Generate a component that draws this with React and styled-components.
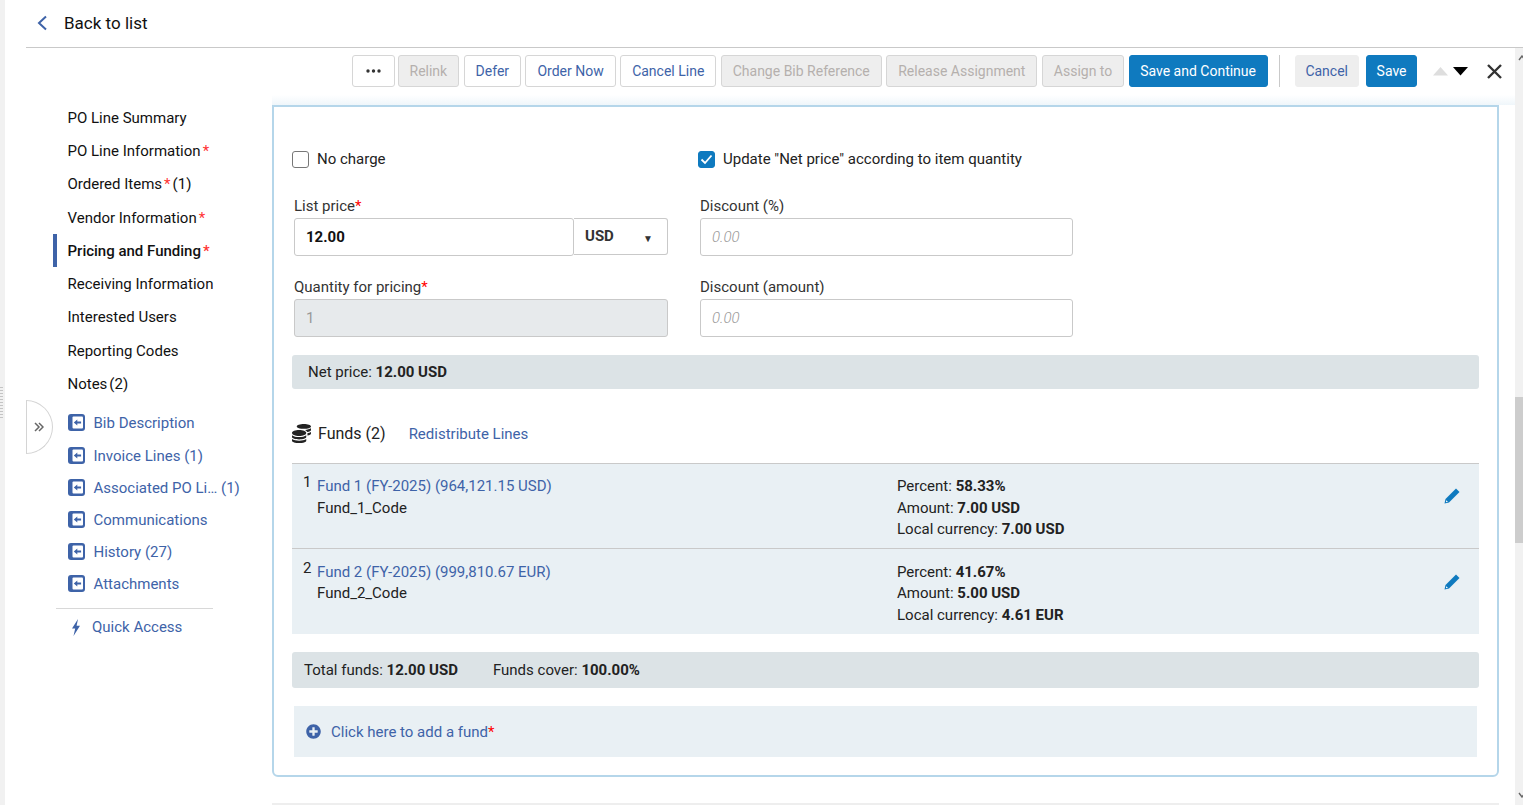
import React from "react";
import styled, { createGlobalStyle } from "styled-components";
import { FaCoins, FaPlusCircle } from "react-icons/fa";

const LINK = "#3e63a8";
const ITEM_BG = "#e9f0f4";
const BAR_BG = "#dce3e6";
const LINE = "#c9c9c9";

const GlobalStyle = createGlobalStyle`
  html, body {
    margin: 0;
    height: 100%;
    overflow: hidden;
    background: #fff;
  }
  body {
    font-family: Roboto, "Liberation Sans", sans-serif;
    font-size: 15px;
    color: #222;
  }
  * { box-sizing: border-box; }
`;

const sections = [
  { name: "PO Line Summary" },
  { name: "PO Line Information", required: true },
  { name: "Ordered Items", required: true, count: "(1)" },
  { name: "Vendor Information", required: true },
  { name: "Pricing and Funding", required: true, active: true },
  { name: "Receiving Information" },
  { name: "Interested Users" },
  { name: "Reporting Codes" },
  { name: "Notes", count: "(2)" },
];

const links = [
  "Bib Description",
  "Invoice Lines (1)",
  "Associated PO Li… (1)",
  "Communications",
  "History (27)",
  "Attachments",
];

const funds = [
  {
    id: 1,
    name: "Fund 1 (FY-2025) (964,121.15 USD)",
    code: "Fund_1_Code",
    percent: "58.33%",
    amount: "7.00 USD",
    local: "7.00 USD",
  },
  {
    id: 2,
    name: "Fund 2 (FY-2025) (999,810.67 EUR)",
    code: "Fund_2_Code",
    percent: "41.67%",
    amount: "5.00 USD",
    local: "4.61 EUR",
  },
];

const LinkIcon = () => (
  <svg width="17" height="17" viewBox="0 0 17 17">
    <rect width="17" height="17" rx="3" fill={LINK} />
    <rect x="4.5" y="2.5" width="10.5" height="12" rx="1" fill="#fff" />
    <path d="M5.8 8.5 9.3 5.5v2h3.8v2H9.3v2z" fill={LINK} />
  </svg>
);

const PencilIcon = () => (
  <svg width="16" height="16" viewBox="0 0 16 16">
    <path d="M12 .5 15.5 4 5 14.5.5 15.5 1.5 11z" fill="#0f7abf" />
    <path d="M2.4 12.2 3.9 13.7 1.9 14.2z" fill="#fff" />
  </svg>
);

const App = () => {
  return (
    <>
      <GlobalStyle />
      <Page>
        <LeftStrip>
          <Grip />
        </LeftStrip>
        <Main>
          <Header>
            <svg width="12" height="16" viewBox="0 0 12 16">
              <path d="M10 1.5 3 8l7 6.5" fill="none" stroke={LINK} strokeWidth="2" />
            </svg>
            <BackText>Back to list</BackText>
          </Header>

          <Workspace>
            <Content>
              <Toolbar>
                <DotsButton>
                  <svg width="15" height="4" viewBox="0 0 15 4">
                    <circle cx="2" cy="2" r="1.7" fill="#333" />
                    <circle cx="7.5" cy="2" r="1.7" fill="#333" />
                    <circle cx="13" cy="2" r="1.7" fill="#333" />
                  </svg>
                </DotsButton>
                <Button disabled>Relink</Button>
                <Button>Defer</Button>
                <Button>Order Now</Button>
                <Button>Cancel Line</Button>
                <Button disabled>Change Bib Reference</Button>
                <Button disabled>Release Assignment</Button>
                <Button disabled>Assign to</Button>
                <PrimaryButton>Save and Continue</PrimaryButton>
                <Separator />
                <GhostButton>Cancel</GhostButton>
                <SaveButton>Save</SaveButton>
                <Arrows>
                  <svg width="15" height="9" viewBox="0 0 15 9">
                    <path d="M0 8.5 7.5 0 15 8.5z" fill="#dedede" />
                  </svg>
                  <svg width="15" height="9" viewBox="0 0 15 9">
                    <path d="M0 0h15L7.5 8.5z" fill="#000" />
                  </svg>
                </Arrows>
                <svg width="17" height="17" viewBox="0 0 17 17">
                  <path d="M2 2l13 13M15 2 2 15" stroke="#333" strokeWidth="2.4" />
                </svg>
              </Toolbar>

              <Body>
                <Sidebar>
                  <CollapseTab>
                    <svg width="10" height="10" viewBox="0 0 10 10">
                      <path d="M1 1l4 4-4 4M5 1l4 4-4 4" fill="none" stroke="#666" strokeWidth="1.5" />
                    </svg>
                  </CollapseTab>
                  <SectionList>
                    {sections.map((s) => (
                      <SectionItem key={s.name} $active={s.active}>
                        {s.name}
                        {s.required && <SideStar>*</SideStar>}
                        {s.count && <Count>{s.count}</Count>}
                      </SectionItem>
                    ))}
                  </SectionList>
                  <LinkList>
                    {links.map((l) => (
                      <LinkItem key={l}>
                        <LinkIcon />
                        {l}
                      </LinkItem>
                    ))}
                  </LinkList>
                  <SideDivider />
                  <QuickAccess>
                    <svg width="10" height="17" viewBox="0 0 10 17">
                      <path d="M7 0 1 9.5h3.2L2.5 17 9 6.8H5.6z" fill={LINK} />
                    </svg>
                    Quick Access
                  </QuickAccess>
                </Sidebar>

                <PanelColumn>
                  <Panel>
                    <ChecksRow>
                      <CheckLabel>
                        <Checkbox />
                        No charge
                      </CheckLabel>
                      <CheckLabel>
                        <Checkbox $checked>
                          <svg width="13" height="11" viewBox="0 0 13 11">
                            <path d="M1.5 5.5 5 9l6.5-7.5" fill="none" stroke="#fff" strokeWidth="1.8" />
                          </svg>
                        </Checkbox>
                        Update "Net price" according to item quantity
                      </CheckLabel>
                    </ChecksRow>

                    <FieldGrid>
                      <Field>
                        <FieldLabel>
                          List price<Star>*</Star>
                        </FieldLabel>
                        <PriceRow>
                          <PriceInput>12.00</PriceInput>
                          <CurrencySelect>
                            USD
                            <Caret>▼</Caret>
                          </CurrencySelect>
                        </PriceRow>
                      </Field>
                      <Field>
                        <FieldLabel>Discount (%)</FieldLabel>
                        <Input>
                          <Placeholder>0.00</Placeholder>
                        </Input>
                      </Field>
                      <Field>
                        <FieldLabel>
                          Quantity for pricing<Star>*</Star>
                        </FieldLabel>
                        <Input $disabled>1</Input>
                      </Field>
                      <Field>
                        <FieldLabel>Discount (amount)</FieldLabel>
                        <Input>
                          <Placeholder>0.00</Placeholder>
                        </Input>
                      </Field>
                    </FieldGrid>

                    <NetBar>
                      Net price: <b>12.00 USD</b>
                    </NetBar>

                    <FundsHead>
                      <FaCoins size={19} color="#222" />
                      <FundsTitle>Funds (2)</FundsTitle>
                      <Redistribute>Redistribute Lines</Redistribute>
                    </FundsHead>

                    <div>
                      {funds.map((f) => (
                        <FundRow key={f.id}>
                          <FundIndex>{f.id}</FundIndex>
                          <FundInfo>
                            <FundName>{f.name}</FundName>
                            <div>{f.code}</div>
                          </FundInfo>
                          <FundAmounts>
                            <div>
                              Percent: <b>{f.percent}</b>
                            </div>
                            <div>
                              Amount: <b>{f.amount}</b>
                            </div>
                            <div>
                              Local currency: <b>{f.local}</b>
                            </div>
                          </FundAmounts>
                          <EditButton>
                            <PencilIcon />
                          </EditButton>
                        </FundRow>
                      ))}
                    </div>

                    <TotalBar>
                      <span>
                        Total funds: <b>12.00 USD</b>
                      </span>
                      <span>
                        Funds cover: <b>100.00%</b>
                      </span>
                    </TotalBar>

                    <AddFund>
                      <FaPlusCircle size={15} color={LINK} />
                      <span>
                        Click here to add a fund<Star>*</Star>
                      </span>
                    </AddFund>
                  </Panel>
                  <BottomRule />
                </PanelColumn>
              </Body>
            </Content>

            <ScrollTrack>
              <ScrollArrow viewBox="0 0 8 6">
                <path d="M1 5 4 1l3 4" fill="none" stroke="#666" strokeWidth="1.4" />
              </ScrollArrow>
              <ScrollThumb />
              <ScrollArrow $bottom viewBox="0 0 8 6">
                <path d="M1 1l3 4 3-4" fill="none" stroke="#666" strokeWidth="1.4" />
              </ScrollArrow>
            </ScrollTrack>
          </Workspace>
        </Main>
      </Page>
    </>
  );
};

export default App;

const Page = styled.div`
  display: flex;
  height: 805px;
  overflow: hidden;
`;

const LeftStrip = styled.div`
  width: 5px;
  flex-shrink: 0;
  padding-top: 387px;
  background: #f1f1f1;
`;

const Grip = styled.div`
  width: 3px;
  height: 31px;
  background: repeating-linear-gradient(to bottom, #c4c4c4 0 1px, transparent 1px 3px);
`;

const Main = styled.div`
  flex: 1;
  min-width: 0;
  display: flex;
  flex-direction: column;
`;

const Header = styled.div`
  height: 48px;
  flex-shrink: 0;
  margin-left: 21px;
  display: flex;
  align-items: center;
  gap: 16px;
  padding: 0 0 2px 10px;
  border-bottom: 1px solid ${LINE};
`;

const BackText = styled.span`
  font-size: 17px;
  color: #111;
`;

const Workspace = styled.div`
  flex: 1;
  min-height: 0;
  display: flex;
`;

const Content = styled.div`
  flex: 1;
  min-width: 0;
  padding-left: 21px;
  display: flex;
  flex-direction: column;
`;

const Toolbar = styled.div`
  display: flex;
  align-items: center;
  justify-content: flex-end;
  gap: 4.4px;
  margin-top: 7px;
  height: 32px;
  padding-right: 12px;
`;

const Button = styled.button`
  height: 32px;
  padding: 0 11px;
  font: 14px Roboto, sans-serif;
  border-radius: 3px;
  white-space: nowrap;
  color: ${(p) => (p.disabled ? "#b5b0ad" : LINK)};
  background: ${(p) => (p.disabled ? "#eeeeee" : "#fff")};
  border: 1px solid #d6d6d6;
`;

const DotsButton = styled(Button)`
  display: flex;
  align-items: center;
  padding: 0 13px;
  margin-right: -1.5px;
`;

const PrimaryButton = styled(Button)`
  padding: 0 10.5px;
  color: #fff;
  background: #0f7abf;
  border-color: #0f7abf;
`;

const SaveButton = styled(PrimaryButton)`
  padding: 0 9.5px;
`;

const GhostButton = styled(Button)`
  padding: 0 9.5px;
  background: #eeeeee;
  border-color: #eeeeee;
  margin-right: 3.2px;
`;

const Separator = styled.div`
  width: 1px;
  height: 32px;
  background: ${LINE};
  margin: 0 10px 0 7.6px;
`;

const Arrows = styled.div`
  display: flex;
  gap: 5px;
  margin: 0 13.6px 0 11.6px;
`;

const Body = styled.div`
  flex: 1;
  display: flex;
  min-height: 0;
`;

const Sidebar = styled.nav`
  position: relative;
  width: 246px;
  flex-shrink: 0;
  padding-top: 14.2px;
`;

const CollapseTab = styled.div`
  position: absolute;
  left: 0;
  top: 313px;
  width: 27px;
  height: 54px;
  display: flex;
  align-items: center;
  justify-content: center;
  padding-right: 2px;
  background: #fff;
  border: 1px solid #d4d4d4;
  border-radius: 0 27px 27px 0;
`;

const SectionList = styled.div`
  padding-left: 27px;
`;

const SectionItem = styled.div`
  height: 33.25px;
  display: flex;
  align-items: center;
  padding-left: 10.5px;
  color: #111;
  border-left: 4px solid ${(p) => (p.$active ? LINK : "transparent")};
  font-weight: ${(p) => (p.$active ? 500 : 400)};
`;

const SideStar = styled.span`
  color: #f33;
  margin-left: 2px;
`;

const Count = styled.span`
  margin-left: 2px;
`;

const LinkList = styled.div`
  margin-top: 6.5px;
  padding-left: 42px;
`;

const LinkItem = styled.a`
  height: 32px;
  display: flex;
  align-items: center;
  gap: 8.5px;
  color: ${LINK};
  white-space: nowrap;

  &:first-child {
    height: 33px;
    padding-bottom: 1px;
  }
`;

const SideDivider = styled.div`
  margin: 8.5px 0 2px 30px;
  width: 157px;
  border-top: 1px solid #d8d8d8;
`;

const QuickAccess = styled.a`
  height: 32px;
  display: flex;
  align-items: center;
  gap: 11px;
  padding-left: 45px;
  color: ${LINK};
`;

const PanelColumn = styled.div`
  flex: 1;
  min-width: 0;
  margin-top: 8px;
  padding: 10px 16px 0 0;
  background: linear-gradient(to bottom, #fff, #eff6fa 10px, #fff 10px);
`;

const Panel = styled.section`
  height: 672px;
  padding: 0 18px;
  border: 2px solid #b5d6ea;
  border-radius: 0 0 6px 6px;
`;

const ChecksRow = styled.div`
  display: grid;
  grid-template-columns: 406px auto;
  padding-top: 43px;
`;

const CheckLabel = styled.label`
  display: flex;
  align-items: center;
  gap: 8px;
  height: 18px;
`;

const Checkbox = styled.span`
  width: 17px;
  height: 17px;
  display: flex;
  align-items: center;
  justify-content: center;
  border-radius: 3px;
  background: ${(p) => (p.$checked ? "#0f7abf" : "#fff")};
  border: 1px solid ${(p) => (p.$checked ? "#0f7abf" : "#777")};
`;

const FieldGrid = styled.div`
  display: grid;
  grid-template-columns: 374px 373px;
  column-gap: 32px;
  row-gap: 21px;
  margin: 28px 0 0 2px;
`;

const Field = styled.div`
  display: flex;
  flex-direction: column;
`;

const FieldLabel = styled.div`
  height: 22px;
  line-height: 20px;
  color: #333;
`;

const Star = styled.span`
  color: #f00;
`;

const Input = styled.div`
  height: 38px;
  display: flex;
  align-items: center;
  padding: 0 11px;
  border: 1px solid ${LINE};
  border-radius: 3px;
  background: ${(p) => (p.$disabled ? "#e7eaec" : "#fff")};
  color: ${(p) => (p.$disabled ? "#999" : "#222")};
`;

const Placeholder = styled.span`
  font-style: italic;
  font-weight: 300;
  color: #999;
`;

const PriceRow = styled.div`
  display: flex;
  align-items: flex-start;
`;

const PriceInput = styled(Input)`
  width: 280px;
  font-weight: 700;
  color: #111;
`;

const CurrencySelect = styled.div`
  flex: 1;
  height: 37px;
  display: flex;
  align-items: center;
  justify-content: space-between;
  padding: 0 14px 1px 11px;
  font-weight: 700;
  color: #333;
  border: 1px solid ${LINE};
  border-left: 0;
  border-radius: 0 3px 3px 0;
`;

const Caret = styled.span`
  font-size: 10px;
  margin-top: 5px;
`;

const NetBar = styled.div`
  height: 34px;
  margin-top: 18px;
  line-height: 34px;
  padding-left: 16px;
  background: ${BAR_BG};
  border-radius: 3px;
`;

const FundsHead = styled.div`
  height: 74px;
  padding-top: 14px;
  display: flex;
  align-items: center;
`;

const FundsTitle = styled.span`
  font-size: 16px;
  margin-left: 7px;
  color: #222;
`;

const Redistribute = styled.a`
  margin: 2px 0 0 23px;
  color: ${LINK};
`;

const FundRow = styled.div`
  display: flex;
  height: 85px;
  padding: 12px 19px 0 11px;
  line-height: 21.5px;
  background: ${ITEM_BG};
  border-top: 1px solid ${LINE};

  &:last-child {
    height: 86px;
    padding-top: 12.6px;
  }
`;

const FundIndex = styled.span`
  width: 14px;
  margin-top: -4px;
`;

const FundInfo = styled.div`
  width: 580px;
`;

const FundName = styled.a`
  color: ${LINK};
`;

const FundAmounts = styled.div`
  flex: 1;
`;

const EditButton = styled.span`
  margin-top: 12px;
`;

const TotalBar = styled.div`
  height: 36px;
  margin-top: 18px;
  display: flex;
  align-items: center;
  gap: 35px;
  padding-left: 12px;
  background: ${BAR_BG};
  border-radius: 3px;
`;

const AddFund = styled.div`
  height: 51px;
  margin: 18px 2px 0;
  display: flex;
  align-items: center;
  gap: 10px;
  padding-left: 12px;
  color: ${LINK};
  background: ${ITEM_BG};
`;

const BottomRule = styled.div`
  margin-top: 26px;
  border-top: 2px solid #eee;
`;

const ScrollTrack = styled.div`
  width: 8px;
  flex-shrink: 0;
  display: flex;
  flex-direction: column;
  background: #f1f1f1;
`;

const ScrollArrow = styled.svg`
  width: 8px;
  height: 6px;
  flex-shrink: 0;
  margin: ${(p) => (p.$bottom ? "auto 0 7px 3px" : "7px 0 0 3px")};
`;

const ScrollThumb = styled.div`
  height: 146px;
  margin-top: 336px;
  background: #cdcdcd;
`;
